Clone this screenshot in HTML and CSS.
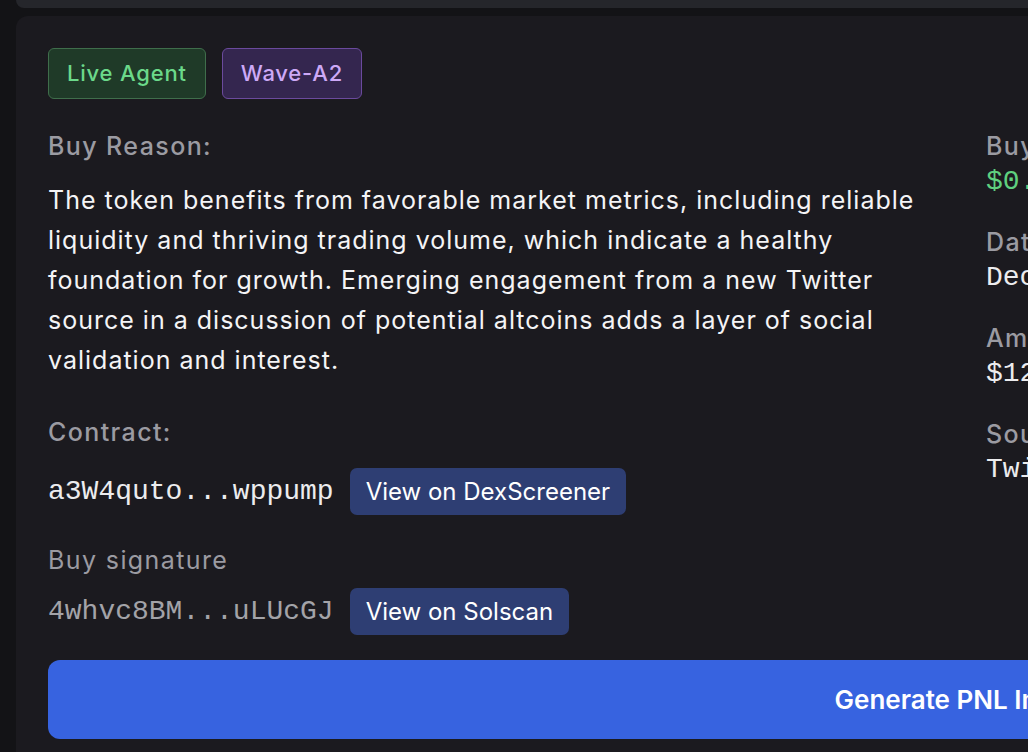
FILE: index.html
```html
<!DOCTYPE html>
<html lang="en">
<head>
<meta charset="utf-8">
<title>Trade</title>
<link rel="stylesheet" href="styles.css">
</head>
<body>
<div class="page">
  <div class="prev-card"></div>
  <div class="card">
    <div class="badges">
      <span class="badge badge-green">Live Agent</span>
      <span class="badge badge-purple">Wave-A2</span>
    </div>
    <div class="grid">
      <div class="left">
        <div class="label">Buy Reason:</div>
        <p class="reason">The token benefits from favorable market metrics, including reliable liquidity and thriving trading volume, which indicate a healthy foundation for growth. Emerging engagement from a new Twitter source in a discussion of potential altcoins adds a layer of social validation and interest.</p>
        <div class="label label-gap">Contract:</div>
        <div class="row">
          <span class="mono">a3W4quto...wppump</span>
          <a class="btn">View on DexScreener</a>
        </div>
        <div class="label label-sig">Buy signature</div>
        <div class="row row-tight">
          <span class="mono mono-dim">4whvc8BM...uLUcGJ</span>
          <a class="btn">View on Solscan</a>
        </div>
      </div>
      <div class="right">
        <div class="stat">
          <div class="label">Buy Price</div>
          <div class="mono mono-green">$0.00012</div>
        </div>
        <div class="stat">
          <div class="label">Date</div>
          <div class="mono">Dec 18, 2024</div>
        </div>
        <div class="stat">
          <div class="label">Amount</div>
          <div class="mono">$120.00</div>
        </div>
        <div class="stat">
          <div class="label">Source</div>
          <div class="mono">Twitter</div>
        </div>
      </div>
    </div>
    <button class="generate">Generate PNL Image</button>
  </div>
</div>
</body>
</html>
```

FILE: styles.css
```css
html, body {
  margin: 0;
  padding: 0;
  background: #131316;
  overflow: hidden;
  height: 752px;
}
body {
  font-family: Inter, "Noto Sans", sans-serif;
  color: #f2f2f4;
}
.page {
  padding: 0 0 0 16px;
  width: 1920px;
}
.prev-card {
  height: 8px;
  background: #25262b;
  border-radius: 0 0 12px 12px;
  margin-bottom: 8px;
}
.card {
  background: #1b1a1f;
  border-radius: 12px;
  padding: 32px;
  width: 1830px;
}
.badges {
  display: flex;
  gap: 16px;
}
.badge {
  font-size: 22px;
  font-weight: 500;
  letter-spacing: 0.8px;
  line-height: 33px;
  padding: 8px 18px;
  border-radius: 6px;
  border: 1px solid;
}
.badge-green {
  background: #1f3a28;
  border-color: #3f6e4b;
  color: #6bd98a;
}
.badge-purple {
  background: #34264f;
  border-color: #6b4a9d;
  color: #cda9f7;
}
.grid {
  display: grid;
  grid-template-columns: 890px 1fr;
  gap: 48px;
  margin-top: 29px;
}
.label {
  font-size: 25px;
  line-height: 36px;
  letter-spacing: 1.4px;
  color: #9b9ba2;
  font-weight: 500;
}
.reason {
  margin: 16px 0 0;
  font-size: 25px;
  letter-spacing: 1px;
  line-height: 40px;
  color: #f4f4f6;
}
.label-gap {
  margin-top: 34px;
}
.label-sig {
  margin-top: 27px;
  font-weight: 400;
}
.row {
  display: flex;
  align-items: center;
  gap: 16px;
  margin-top: 18px;
}
.row-tight {
  margin-top: 10px;
}
.mono {
  font-family: "Liberation Mono", "Courier New", monospace;
  font-size: 28px;
  line-height: 36px;
  color: #ececee;
}
.mono-dim {
  color: #a3a3a8;
}
.mono-green {
  color: #5fd07f;
}
.btn {
  display: inline-block;
  background: #2e3e73;
  color: #ffffff;
  font-size: 24px;
  line-height: 47px;
  padding: 0 16px;
  border-radius: 7px;
}
.right {
  display: flex;
  flex-direction: column;
  gap: 24px;
}
.generate {
  display: block;
  width: 100%;
  margin-top: 25px;
  height: 79px;
  border: none;
  border-radius: 12px;
  background: #3763e0;
  color: #ffffff;
  font-family: Inter, "Noto Sans", sans-serif;
  font-size: 26px;
  font-weight: 600;
}
```
